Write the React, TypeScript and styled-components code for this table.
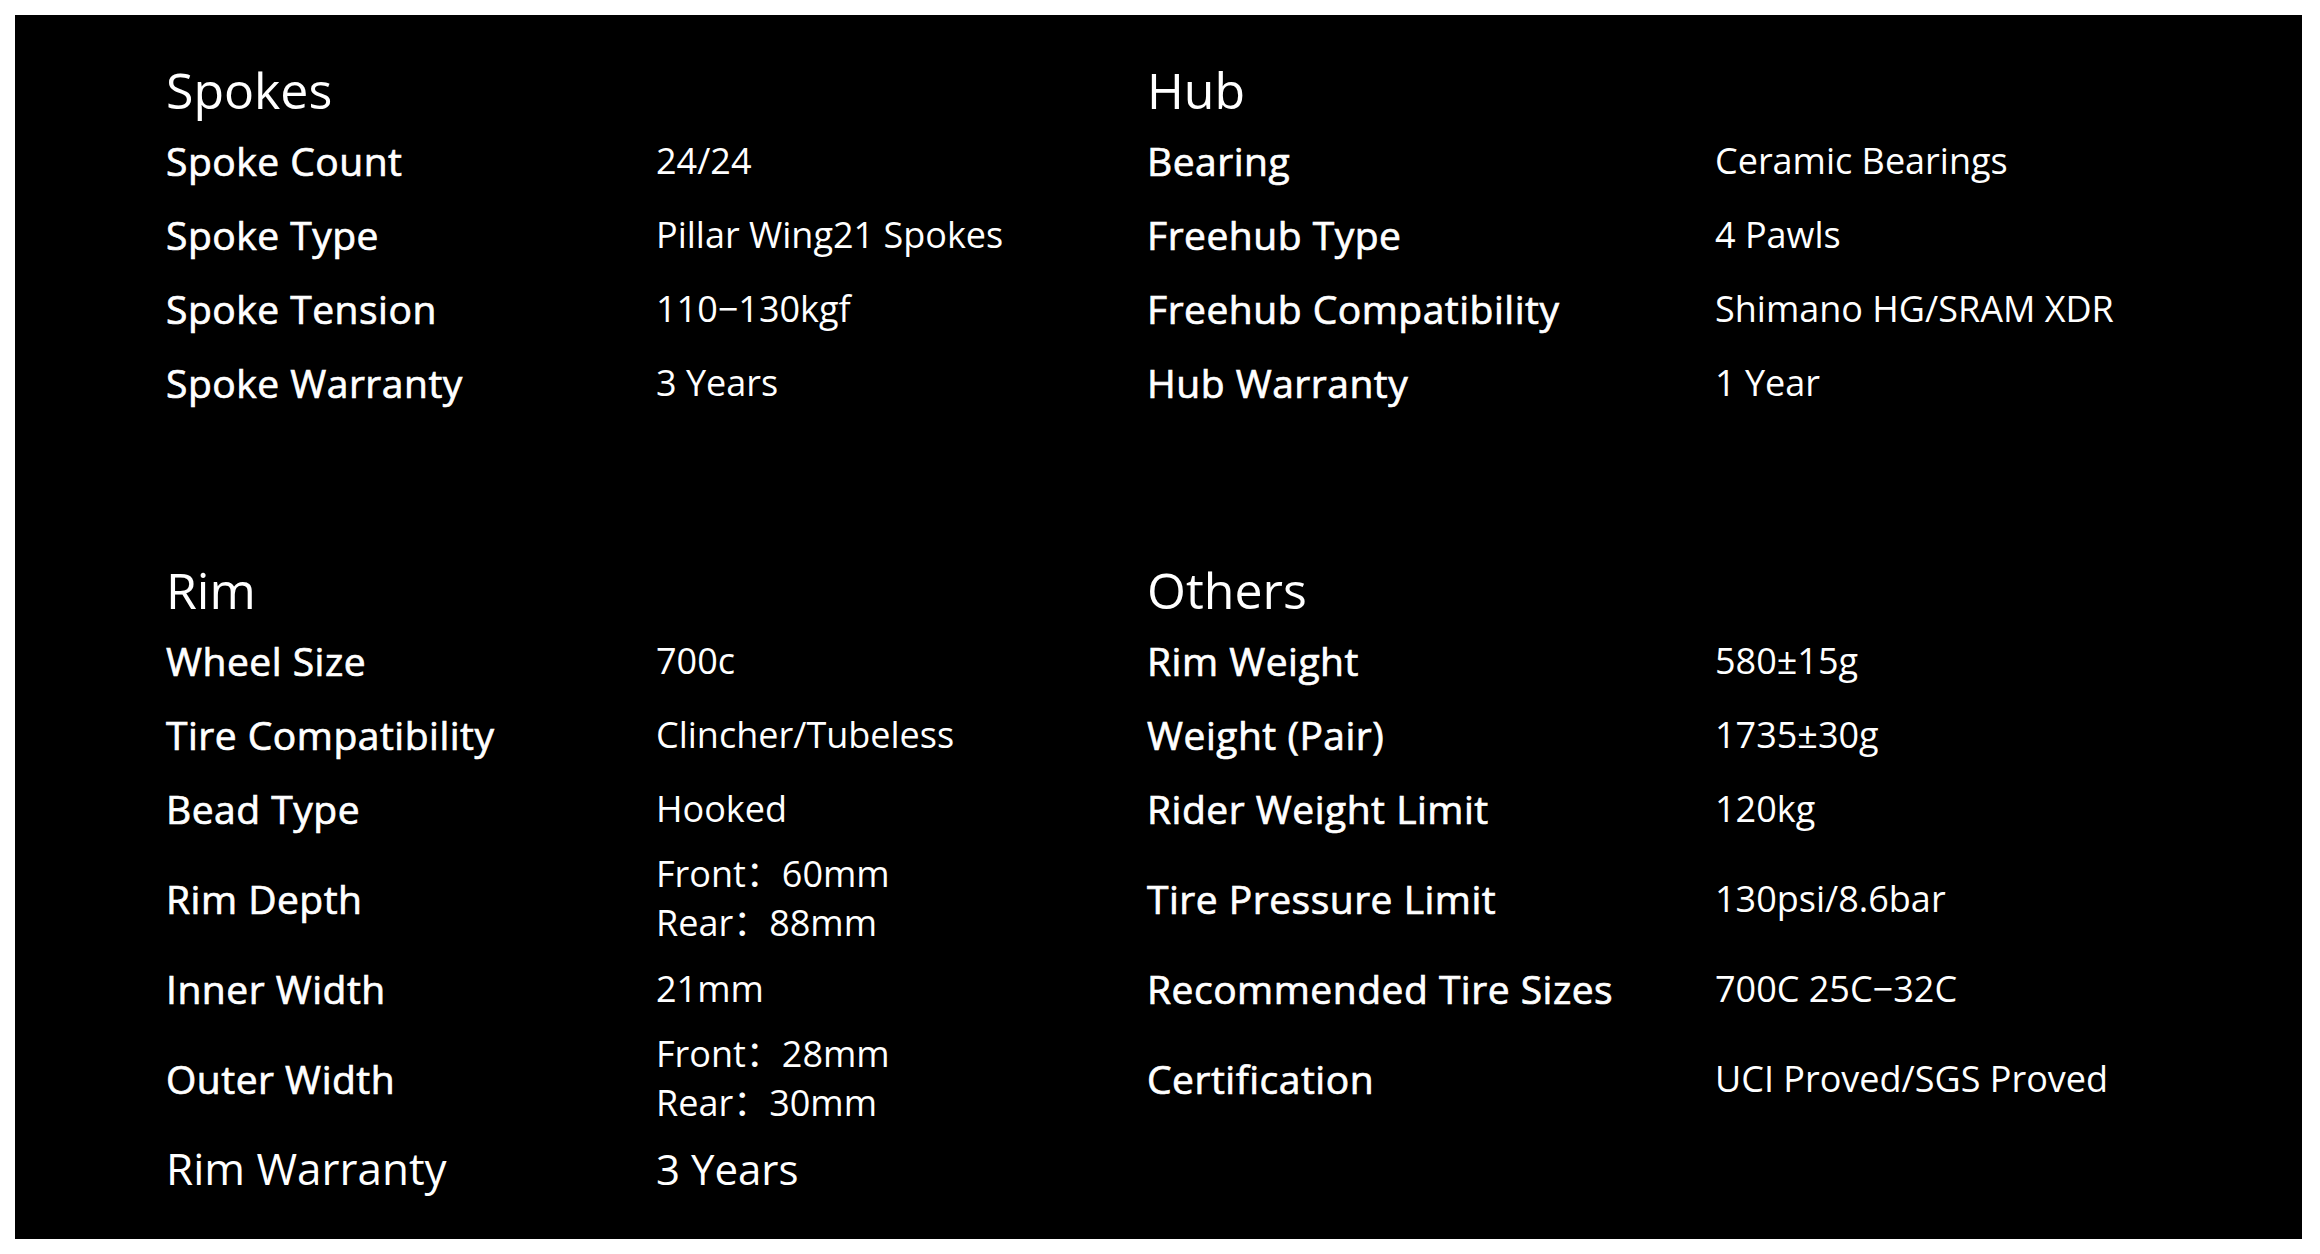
import styled, { createGlobalStyle } from "styled-components";

type Row = {
  label: string;
  value: string[];
  otherLabel?: string;
  otherValue?: string;
  large?: boolean;
};

type Block = {
  left: string;
  right: string;
  rows: Row[];
};

const blocks: Block[] = [
  {
    left: "Spokes",
    right: "Hub",
    rows: [
      { label: "Spoke Count", value: ["24/24"], otherLabel: "Bearing", otherValue: "Ceramic Bearings" },
      { label: "Spoke Type", value: ["Pillar Wing21 Spokes"], otherLabel: "Freehub Type", otherValue: "4 Pawls" },
      { label: "Spoke Tension", value: ["110−130kgf"], otherLabel: "Freehub Compatibility", otherValue: "Shimano HG/SRAM XDR" },
      { label: "Spoke Warranty", value: ["3 Years"], otherLabel: "Hub Warranty", otherValue: "1 Year" },
    ],
  },
  {
    left: "Rim",
    right: "Others",
    rows: [
      { label: "Wheel Size", value: ["700c"], otherLabel: "Rim Weight", otherValue: "580±15g" },
      { label: "Tire Compatibility", value: ["Clincher/Tubeless"], otherLabel: "Weight (Pair)", otherValue: "1735±30g" },
      { label: "Bead Type", value: ["Hooked"], otherLabel: "Rider Weight Limit", otherValue: "120kg" },
      { label: "Rim Depth", value: ["Front：60mm", "Rear：88mm"], otherLabel: "Tire Pressure Limit", otherValue: "130psi/8.6bar" },
      { label: "Inner Width", value: ["21mm"], otherLabel: "Recommended Tire Sizes", otherValue: "700C 25C−32C" },
      { label: "Outer Width", value: ["Front：28mm", "Rear：30mm"], otherLabel: "Certification", otherValue: "UCI Proved/SGS Proved" },
      { label: "Rim Warranty", value: ["3 Years"], large: true },
    ],
  },
];

const App = () => {
  return (
    <>
      <GlobalStyle />
      <Page>
        <Panel>
          {blocks.map((block) => (
            <SpecGrid key={block.left}>
              <Heading>{block.left}</Heading>
              <Heading>{block.right}</Heading>
              {block.rows.map((row) => (
                <Line key={row.label}>
                  <Label $large={row.large}>{row.label}</Label>
                  <Value $large={row.large}>
                    {row.value.map((v) => (
                      <span key={v}>{v}</span>
                    ))}
                  </Value>
                  <Label>{row.otherLabel}</Label>
                  <Value>{row.otherValue && <span>{row.otherValue}</span>}</Value>
                </Line>
              ))}
            </SpecGrid>
          ))}
        </Panel>
      </Page>
    </>
  );
};

export default App;

const GlobalStyle = createGlobalStyle`
  html, body {
    margin: 0;
    padding: 0;
    background: #fff;
  }
  body {
    font-family: "Open Sans", "Noto Sans CJK SC", sans-serif;
    color: #fff;
  }
  * {
    box-sizing: border-box;
  }
`;

const Page = styled.div`
  height: 100vh;
  padding: 15px 18px 15px 15px;
`;

const Panel = styled.div`
  height: 100%;
  background: #000;
  padding: 45px 0 0 151px;
  display: flex;
  flex-direction: column;
  gap: 141px;
`;

const SpecGrid = styled.div`
  display: grid;
  grid-template-columns: 490px 491px 568px 1fr;
`;

const Heading = styled.h2`
  grid-column: span 2;
  margin: 0 0 3px;
  font-size: 50px;
  line-height: 60px;
  font-weight: 400;
  color: #fff;
`;

const Line = styled.div`
  display: contents;
`;

const Cell = styled.div<{ $large?: boolean }>`
  min-height: 74px;
  padding: 4px 0;
  display: flex;
  flex-direction: column;
  justify-content: center;
  line-height: 49px;
  white-space: nowrap;
`;

const Label = styled(Cell)`
  font-size: ${(p) => (p.$large ? "44px" : "39px")};
  font-weight: 400;
  letter-spacing: ${(p) => (p.$large ? "0" : "0.5px")};
  -webkit-text-stroke: ${(p) => (p.$large ? "0" : "0.7px #fff")};
`;

const Value = styled(Cell)`
  font-size: ${(p) => (p.$large ? "42px" : "36px")};
  font-weight: 400;
`;
